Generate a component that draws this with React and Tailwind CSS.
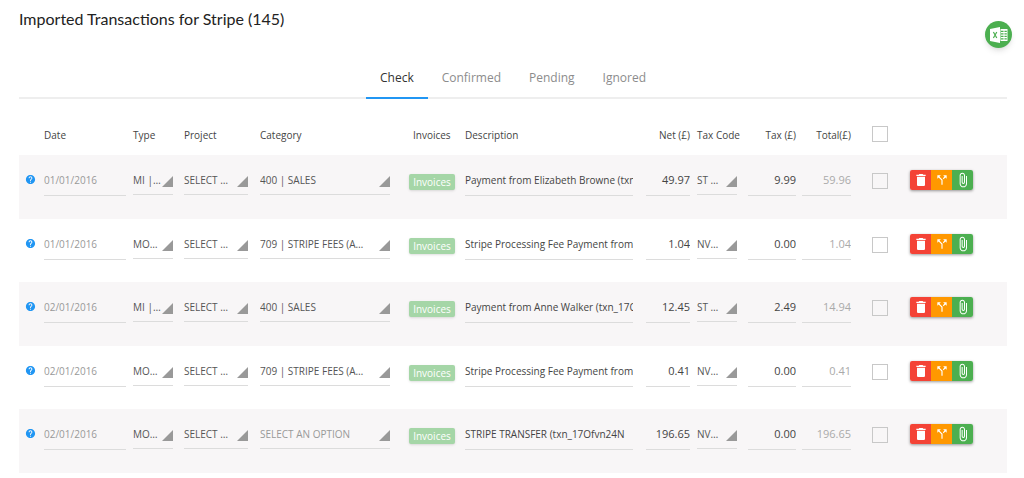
import { MdAttachFile, MdCallSplit, MdDelete, MdHelp } from "react-icons/md";

const tabs = ["Check", "Confirmed", "Pending", "Ignored"];

const types = { in: "MI | MONEY IN", out: "MONEY OUT" };
const taxCodes = { standard: "ST | STANDARD", none: "NVAT | NO VAT" };
const fees = "709 | STRIPE FEES (ADMIN)";
const sales = "400 | SALES";

const rows = [
  { date: "01/01/2016", type: types.in, category: sales, description: "Payment from Elizabeth Browne (txn_17Ofvn)", net: "49.97", code: taxCodes.standard, tax: "9.99", total: "59.96" },
  { date: "01/01/2016", type: types.out, category: fees, description: "Stripe Processing Fee Payment from", net: "1.04", code: taxCodes.none, tax: "0.00", total: "1.04" },
  { date: "02/01/2016", type: types.in, category: sales, description: "Payment from Anne Walker (txn_17Ofvn)", net: "12.45", code: taxCodes.standard, tax: "2.49", total: "14.94" },
  { date: "02/01/2016", type: types.out, category: fees, description: "Stripe Processing Fee Payment from", net: "0.41", code: taxCodes.none, tax: "0.00", total: "0.41" },
  { date: "02/01/2016", type: types.out, category: "", description: "STRIPE TRANSFER (txn_17Ofvn24N", net: "196.65", code: taxCodes.none, tax: "0.00", total: "196.65" },
];

function Field({ label, value, className = "" }) {
  return (
    <input
      type="text"
      aria-label={label}
      defaultValue={value}
      className={`block h-[26px] w-full rounded-none border-b border-[#dcdcdc] bg-transparent pb-1.5 outline-none ${className}`}
    />
  );
}

function Picker({ label, value, options, className = "pr-4 text-[#555]" }) {
  return (
    <div className="grid">
      <select
        aria-label={label}
        defaultValue={value}
        className={`col-start-1 row-start-1 h-[25px] w-full appearance-none overflow-hidden rounded-none border-b border-[#dcdcdc] bg-transparent pb-1 text-ellipsis whitespace-nowrap outline-none ${className}`}
      >
        {options.map((option) => (
          <option key={option} value={option === "SELECT AN OPTION" ? "" : option}>
            {option}
          </option>
        ))}
      </select>
      <svg viewBox="0 0 11 11" className="pointer-events-none col-start-1 row-start-1 mb-2 size-[11px] self-end justify-self-end" aria-hidden="true">
        <path d="M11 0v11H0z" fill="#999" />
      </svg>
    </div>
  );
}

function Tick({ label }) {
  return (
    <input
      type="checkbox"
      aria-label={label}
      className="block size-4 appearance-none border border-[#c8c8c8] checked:bg-[#2196f3]"
    />
  );
}

function ExcelIcon() {
  return (
    <svg viewBox="0 0 18 16" className="h-4 w-[18px]" aria-hidden="true">
      <path d="M0 2 10 0v16L0 14z" fill="#fff" />
      <path d="m3.4 5 3.4 6M6.8 5l-3.4 6" stroke="#4caf50" strokeWidth="1.2" />
      <path d="M10.5 2H17.5v12h-7z" fill="#fff" />
      <path d="M11 4.3h5.8M11 6.8h5.8M11 9.3h5.8M11 11.8h5.8" stroke="#4caf50" strokeWidth="1.3" />
      <path d="M14 3v10" stroke="#fff" strokeWidth=".9" />
    </svg>
  );
}

export default function App() {
  return (
    <main className="bg-white pr-[17px] pl-[19px] font-['Open_Sans',sans-serif] text-[10px] leading-4 text-[#444]">
      <header className="-mr-[5px] flex items-start justify-between">
        <h1 className="pt-[7px] font-['Lato',sans-serif] text-[16px] leading-6 text-[#222]">Imported Transactions for Stripe (145)</h1>
        <button type="button" aria-label="Export to Excel" className="mt-[21px] flex size-[27px] items-center justify-center rounded-full bg-[#4caf50] shadow-md">
          <ExcelIcon />
        </button>
      </header>

      <div role="tablist" className="mt-2 flex h-[43px] justify-center border-b-2 border-[#eee] text-[12px]">
        {tabs.map((tab, i) => (
          <button
            key={tab}
            type="button"
            role="tab"
            aria-selected={i === 0}
            className={`-mb-0.5 border-b-2 px-[14px] pt-0.5 ${i === 0 ? "border-[#2196f3] text-[#333]" : "border-transparent text-[#8c8c8c]"}`}
          >
            {tab}
          </button>
        ))}
      </div>

      <table className="w-full table-fixed text-left">
        <colgroup>
          <col className="w-[25px]" />
          <col className="w-[89px]" />
          <col className="w-[51px]" />
          <col className="w-[76px]" />
          <col className="w-[149px]" />
          <col className="w-[56px]" />
          <col />
          <col className="w-[51px]" />
          <col className="w-[51px]" />
          <col className="w-[54px]" />
          <col className="w-[70px]" />
          <col className="w-[38px]" />
          <col className="w-[97px]" />
        </colgroup>
        <thead>
          <tr className="h-14 leading-[18px] whitespace-nowrap *:pt-[27px] *:align-top *:font-normal">
            <td />
            <th>Date</th>
            <th>Type</th>
            <th>Project</th>
            <th>Category</th>
            <th className="pl-1">Invoices</th>
            <th>Description</th>
            <th className="pr-[7px] text-right">Net (£)</th>
            <th>Tax Code</th>
            <th className="pr-1.5 text-right">Tax (£)</th>
            <th className="pr-[21px] text-right">Total(£)</th>
            <th><Tick label="Select all" /></th>
            <td />
          </tr>
        </thead>
        <tbody>
          {rows.map((row, i) => (
            <tr key={i} className="h-[63px] *:pt-[15px] *:align-top odd:h-16 odd:bg-[#f8f6f7]">
              <td className="pl-1.5">
                <MdHelp className="mt-1 size-[11px] text-[#2196f3]" role="img" aria-label="Help" />
              </td>
              <td className="pr-[7px]"><Field label="Date" value={row.date} className="text-[#999]" /></td>
              <td className="pr-[11px]"><Picker label="Type" value={row.type} options={Object.values(types)} className="pr-3 text-[#555]" /></td>
              <td className="pr-3"><Picker label="Project" value="" options={["SELECT AN OPTION"]} /></td>
              <td className="pr-[19px]">
                <Picker label="Category" value={row.category} options={["SELECT AN OPTION", sales, fees]} className={row.category ? "pr-6 text-[#555]" : "pr-6 text-[#999]"} />
              </td>
              <td className="pr-2.5">
                <button type="button" className="mt-1 block h-4 w-full rounded-xs bg-[#a5d6a7] text-center text-white shadow">Invoices</button>
              </td>
              <td className="pr-[13px]"><Field label="Description" value={row.description} /></td>
              <td className="pr-[7px]"><Field label="Net" value={row.net} className="text-right text-[11px]" /></td>
              <td className="pr-[11px]"><Picker label="Tax code" value={row.code} options={Object.values(taxCodes)} /></td>
              <td className="pr-1.5"><Field label="Tax" value={row.tax} className="text-right text-[11px]" /></td>
              <td className="pr-[21px]"><Field label="Total" value={row.total} className="text-right text-[11px] text-[#aaa]" /></td>
              <td><div className="pt-[3px]"><Tick label="Select row" /></div></td>
              <td>
                <div className="flex h-5 w-[63px] overflow-hidden rounded-xs text-white shadow-[0_1px_3px_rgba(0,0,0,0.4)]">
                  <button type="button" aria-label="Delete" className="flex flex-1 items-center justify-center bg-[#f44336]"><MdDelete className="size-4" /></button>
                  <button type="button" aria-label="Split" className="flex flex-1 items-center justify-center bg-[#ff9800]"><MdCallSplit className="size-[14px]" /></button>
                  <button type="button" aria-label="Attach" className="flex flex-1 items-center justify-center bg-[#4caf50]"><MdAttachFile className="size-4" /></button>
                </div>
              </td>
            </tr>
          ))}
        </tbody>
      </table>
    </main>
  );
}
